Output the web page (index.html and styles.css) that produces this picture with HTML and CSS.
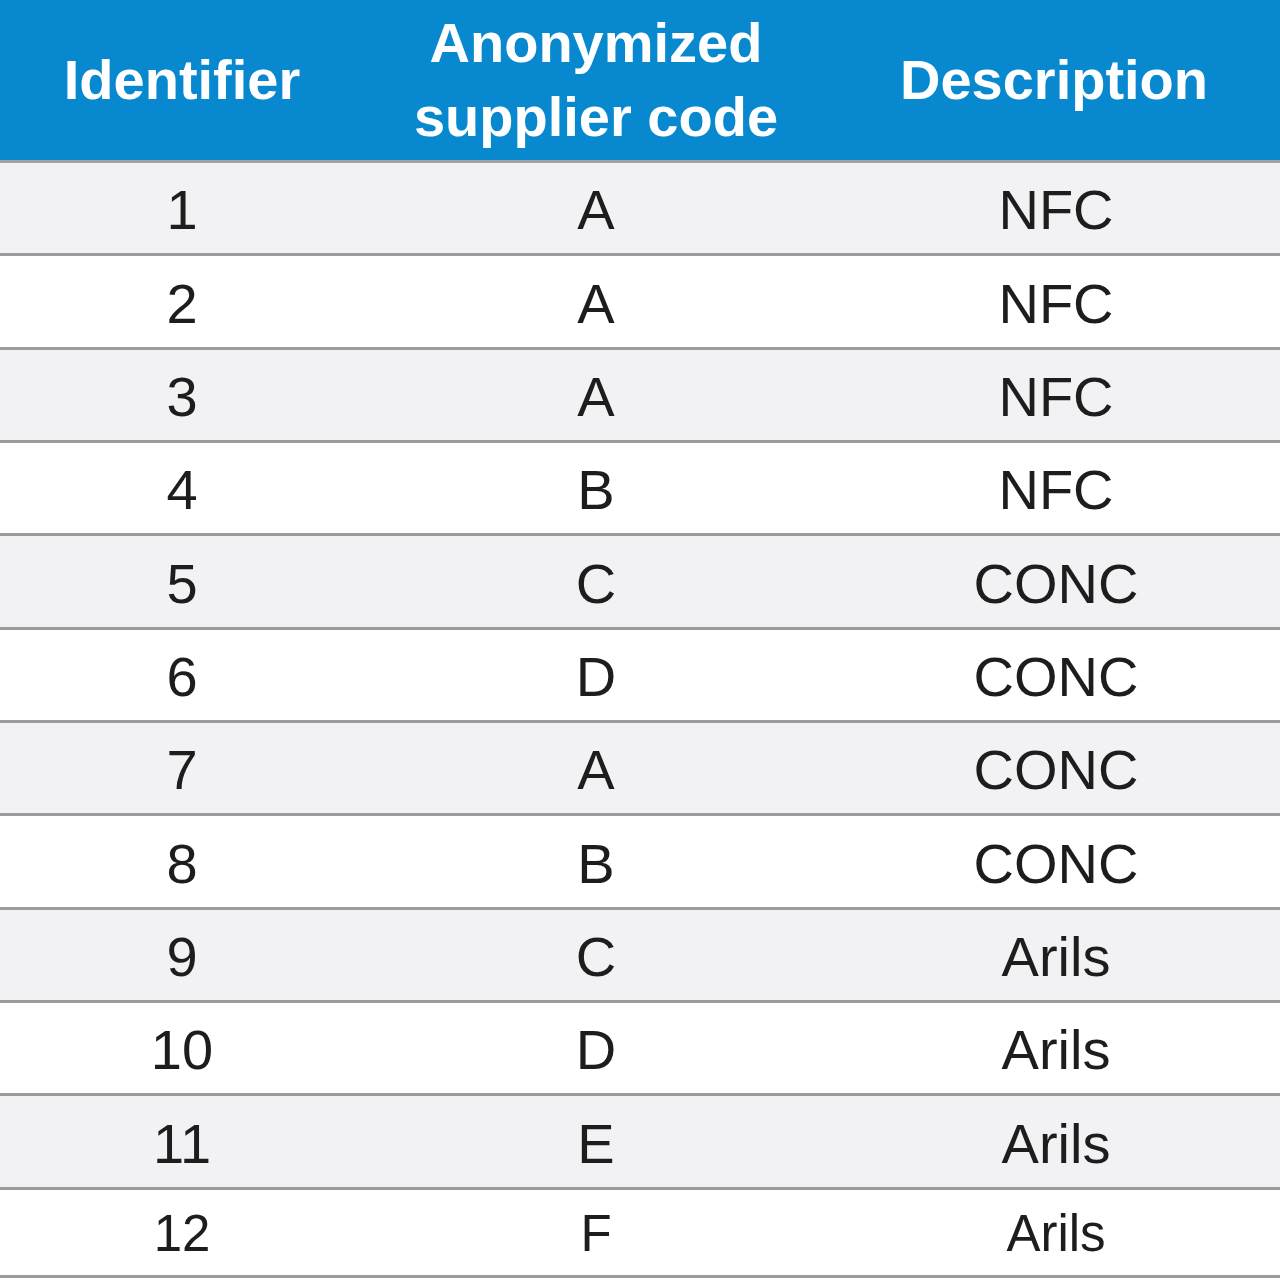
FILE: index.html
```html
<!DOCTYPE html>
<html>
<head>
<meta charset="utf-8">
<link rel="stylesheet" href="styles.css">
</head>
<body>
<div class="table">
  <div class="head">
    <div class="hcell">Identifier</div>
    <div class="hcell">Anonymized<br>supplier code</div>
    <div class="hcell">Description</div>
  </div>
  <div class="row shade"><div class="cell">1</div><div class="cell">A</div><div class="cell">NFC</div></div>
  <div class="row"><div class="cell">2</div><div class="cell">A</div><div class="cell">NFC</div></div>
  <div class="row shade"><div class="cell">3</div><div class="cell">A</div><div class="cell">NFC</div></div>
  <div class="row"><div class="cell">4</div><div class="cell">B</div><div class="cell">NFC</div></div>
  <div class="row shade"><div class="cell">5</div><div class="cell">C</div><div class="cell">CONC</div></div>
  <div class="row"><div class="cell">6</div><div class="cell">D</div><div class="cell">CONC</div></div>
  <div class="row shade"><div class="cell">7</div><div class="cell">A</div><div class="cell">CONC</div></div>
  <div class="row"><div class="cell">8</div><div class="cell">B</div><div class="cell">CONC</div></div>
  <div class="row shade"><div class="cell">9</div><div class="cell">C</div><div class="cell">Arils</div></div>
  <div class="row"><div class="cell">10</div><div class="cell">D</div><div class="cell">Arils</div></div>
  <div class="row shade"><div class="cell">11</div><div class="cell">E</div><div class="cell">Arils</div></div>
  <div class="row last"><div class="cell">12</div><div class="cell">F</div><div class="cell">Arils</div></div>
</div>
</body>
</html>
```

FILE: styles.css
```css
html, body {
  margin: 0;
  padding: 0;
  background: #ffffff;
}

.table {
  width: 1280px;
  font-family: "Liberation Sans", Arial, sans-serif;
}

.head {
  display: grid;
  grid-template-columns: 364px 464px 452px;
  height: 160px;
  background: #0889cf;
  border-bottom: 3px solid #9ea3a7;
}

.hcell {
  display: flex;
  align-items: center;
  justify-content: center;
  text-align: center;
  color: #ffffff;
  font-weight: bold;
  font-size: 56px;
  line-height: 74px;
}

.row {
  display: grid;
  grid-template-columns: 364px 464px 452px;
  height: 90px;
  border-bottom: 3px solid #9b9b9b;
  background: #ffffff;
}

.row:nth-child(3n) {
  height: 91px;
}

.row.shade {
  background: #f2f2f4;
}

.cell {
  display: flex;
  align-items: center;
  justify-content: center;
  padding-top: 4px;
  color: #1e1c1d;
  font-size: 56px;
  line-height: 1;
}

.cell:nth-child(3) {
  padding-left: 4px;
}

.row.last {
  height: 85px;
}

.row.last .cell {
  font-size: 51px;
  padding-top: 2px;
}
```
